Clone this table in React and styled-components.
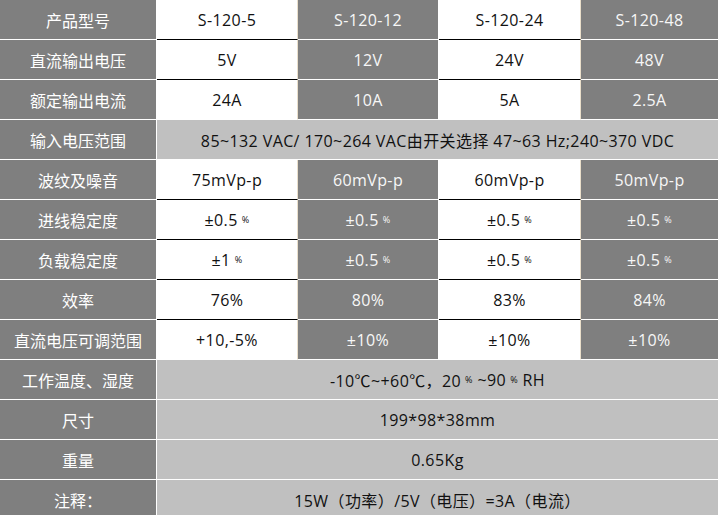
import React from 'react';
import styled, { createGlobalStyle } from 'styled-components';

const GlobalStyle = createGlobalStyle`
  html, body {
    margin: 0;
    padding: 0;
    background: #ffffff;
    overflow: hidden;
  }
`;

const Table = styled.div`
  display: grid;
  grid-template-columns: 157px 141px 141px 142px 137px;
  width: 718px;
  font-family: "Open Sans", "Noto Sans CJK SC", sans-serif;
  font-size: 16px;
`;

const LabelCell = styled.div`
  box-sizing: border-box;
  height: 40px;
  display: flex;
  align-items: center;
  justify-content: center;
  background-color: #7f7f7f;
  color: #ffffff;
  border-right: 1px solid #ffffff;
  border-bottom: 1px solid #ffffff;
  white-space: nowrap;
`;

const ValueCell = styled.div`
  box-sizing: border-box;
  height: 40px;
  display: flex;
  align-items: center;
  justify-content: center;
  white-space: nowrap;
  letter-spacing: 0.4px;
  background-color: ${({ $light }) => ($light ? '#ffffff' : '#7f7f7f')};
  color: ${({ $light }) => ($light ? '#111111' : '#f7f7f7')};
  border-right: 1px solid ${({ $light }) => ($light ? '#eadfcb' : '#ffffff')};
  border-bottom: 1px solid
    ${({ $light, $last }) => ($light ? ($last ? '#ffffff' : '#000000') : '#ffffff')};

  &:last-child {
    border-right: none;
  }
`;

const SpanCell = styled.div`
  grid-column: span 4;
  box-sizing: border-box;
  height: 40px;
  display: flex;
  align-items: center;
  justify-content: center;
  white-space: nowrap;
  letter-spacing: 0.4px;
  background-color: #c0c0c0;
  color: #111111;
  border-bottom: 1px solid #ffffff;
`;

const Row = styled.div`
  display: contents;
`;

const Pct = styled.span`
  font-size: 9px;
  margin-left: 4px;
`;

const models = ['S-120-5', 'S-120-12', 'S-120-24', 'S-120-48'];
const small = (v) => (
  <>
    {v}
    <Pct>%</Pct>
  </>
);

const rows = [
  { label: '产品型号', values: models },
  { label: '直流输出电压', values: ['5V', '12V', '24V', '48V'] },
  { label: '额定输出电流', values: ['24A', '10A', '5A', '2.5A'], last: true },
  { label: '输入电压范围', span: '85~132 VAC/ 170~264 VAC由开关选择 47~63 Hz;240~370 VDC' },
  { label: '波纹及噪音', values: ['75mVp-p', '60mVp-p', '60mVp-p', '50mVp-p'] },
  { label: '进线稳定度', values: [small('±0.5'), small('±0.5'), small('±0.5'), small('±0.5')] },
  { label: '负载稳定度', values: [small('±1'), small('±0.5'), small('±0.5'), small('±0.5')] },
  { label: '效率', values: ['76%', '80%', '83%', '84%'] },
  { label: '直流电压可调范围', values: ['+10,-5%', '±10%', '±10%', '±10%'], last: true },
  {
    label: '工作温度、湿度',
    span: (
      <>
        -10℃~+60℃，20<Pct>%</Pct>&nbsp;~90<Pct>%</Pct>&nbsp;RH
      </>
    ),
  },
  { label: '尺寸', span: '199*98*38mm' },
  { label: '重量', span: '0.65Kg' },
  { label: '注释：', span: '15W（功率）/5V（电压）=3A（电流）' },
];

const App = () => (
  <>
    <GlobalStyle />
    <Table>
      {rows.map((row) => (
        <Row key={row.label}>
          <LabelCell>{row.label}</LabelCell>
          {row.span ? (
            <SpanCell>{row.span}</SpanCell>
          ) : (
            row.values.map((v, i) => (
              <ValueCell key={i} $light={i % 2 === 0} $last={row.last}>
                {v}
              </ValueCell>
            ))
          )}
        </Row>
      ))}
    </Table>
  </>
);

export default App;
